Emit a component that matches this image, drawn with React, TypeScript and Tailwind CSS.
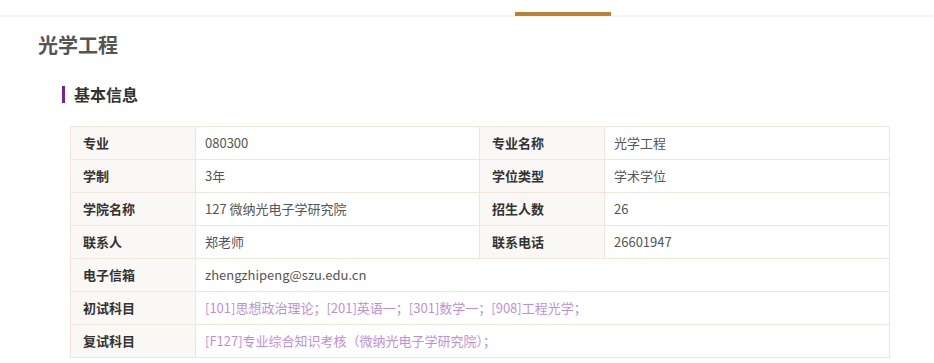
import React from 'react';

type Cell = {
  label: string;
  value: string;
  wide?: boolean;
  purple?: boolean;
};

const rows: Cell[][] = [
  [
    { label: '专业', value: '080300' },
    { label: '专业名称', value: '光学工程' },
  ],
  [
    { label: '学制', value: '3年' },
    { label: '学位类型', value: '学术学位' },
  ],
  [
    { label: '学院名称', value: '127 微纳光电子学研究院' },
    { label: '招生人数', value: '26' },
  ],
  [
    { label: '联系人', value: '郑老师' },
    { label: '联系电话', value: '26601947' },
  ],
  [{ label: '电子信箱', value: 'zhengzhipeng@szu.edu.cn', wide: true }],
  [
    {
      label: '初试科目',
      value: '[101]思想政治理论；[201]英语一；[301]数学一；[908]工程光学；',
      wide: true,
      purple: true,
    },
  ],
  [
    {
      label: '复试科目',
      value: '[F127]专业综合知识考核（微纳光电子学研究院）；',
      wide: true,
      purple: true,
    },
  ],
];

const App: React.FC = () => {
  return (
    <div
      className="w-[934px] h-[363px] overflow-hidden bg-white"
      style={{ fontFamily: '"Microsoft YaHei", "Noto Sans CJK SC", "Noto Sans", sans-serif' }}
    >
      {/* top tab strip */}
      <div className="h-[17px] pt-[12px] border-b-2 border-[#f7f3ee]">
        <div className="relative ml-[515px] w-[96px] h-[4px] bg-[#bd8132]" />
      </div>

      <h1 className="mt-[14px] pl-[38px] text-[20px] leading-[28px] font-bold text-[#555555]">
        光学工程
      </h1>

      <div className="mt-[23px] pl-[62px] flex items-center h-[24px]">
        <div className="w-[3px] h-[17px] bg-[#7a1fa2]" />
        <h2 className="ml-[9px] text-[16px] leading-[24px] font-bold text-[#333333]">
          基本信息
        </h2>
      </div>

      <div className="mt-[20px] ml-[70px] w-[820px] grid grid-cols-[124px_283px_124px_284px] auto-rows-[32px] gap-px p-px bg-[#f3e6d8]">
        {rows.map((row, i) =>
          row.map((c, j) => (
            <React.Fragment key={`${i}-${j}`}>
              <div className="bg-[#faf8f5] pl-[12px] flex items-center text-[13px] font-bold text-[#333333]">
                {c.label}
              </div>
              <div
                className={`bg-white pl-[9px] flex items-center text-[13px] ${
                  c.wide ? 'col-span-3' : ''
                } ${c.purple ? 'text-[#bf8fdc]' : 'text-[#555555]'}`}
              >
                {c.value}
              </div>
            </React.Fragment>
          ))
        )}
      </div>
    </div>
  );
};

export default App;
